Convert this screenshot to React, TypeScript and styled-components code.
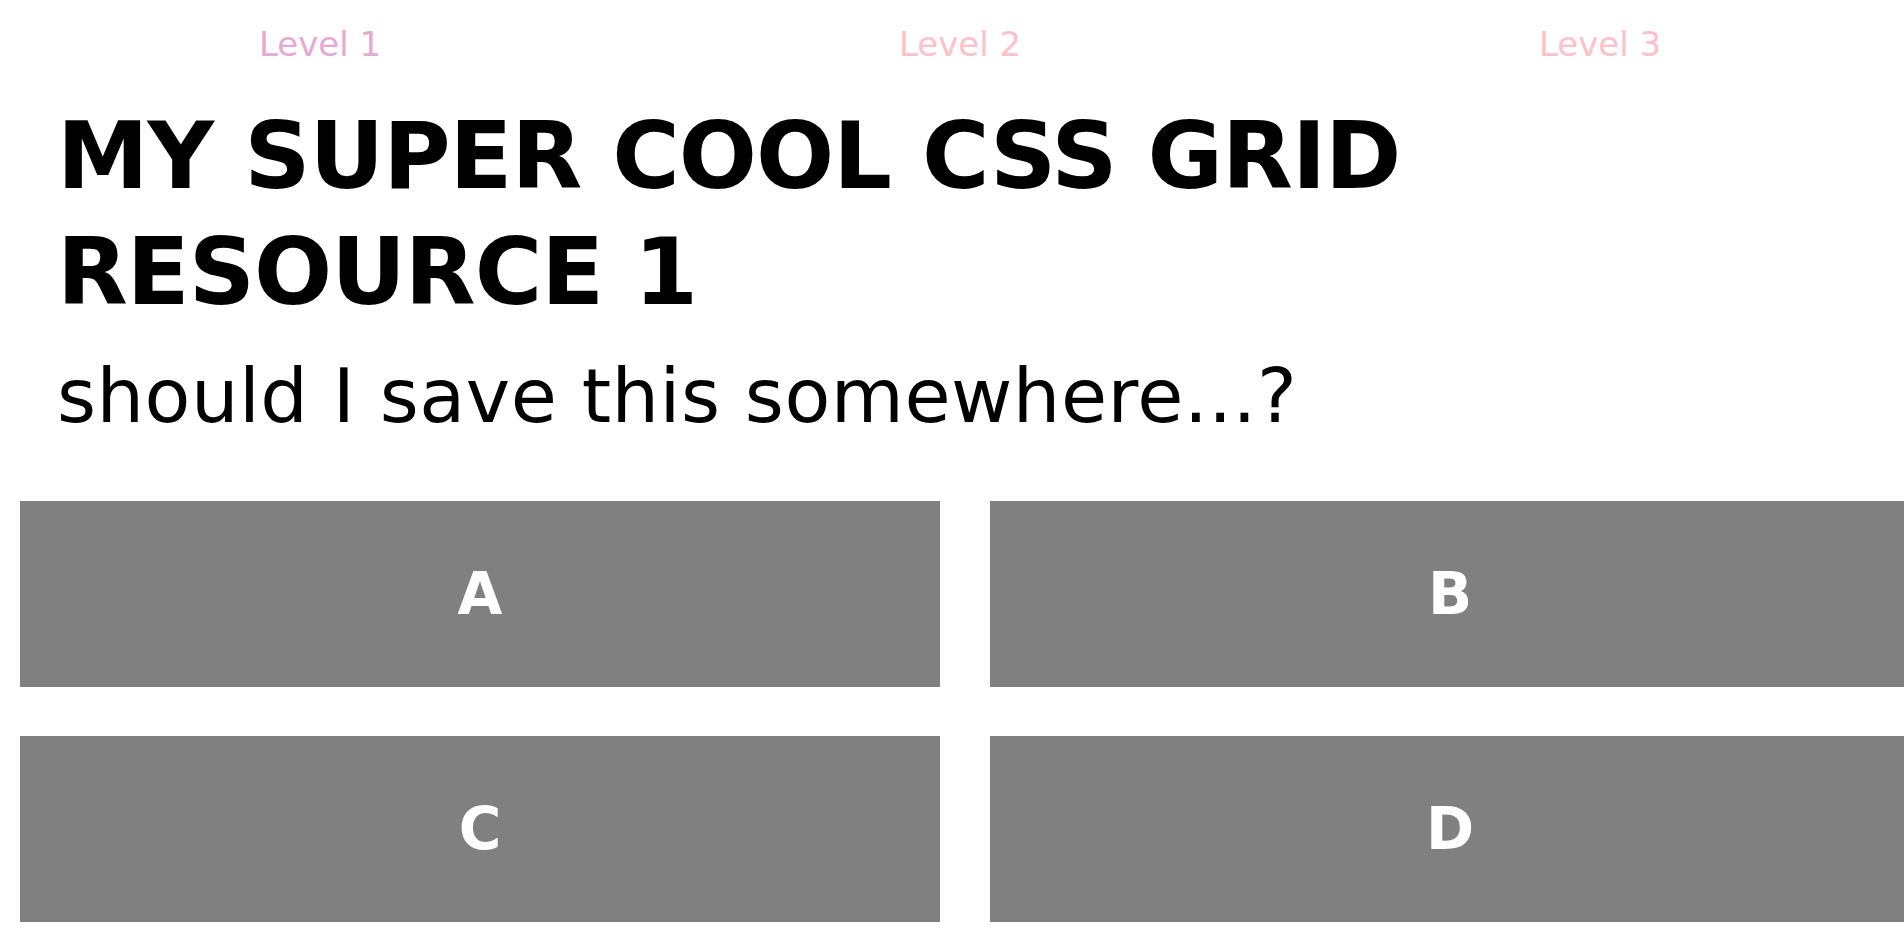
import React from "react";
import styled, { createGlobalStyle } from "styled-components";

const GlobalStyle = createGlobalStyle`
  html, body {
    margin: 0;
    padding: 0;
    overflow: hidden;
    background: #ffffff;
  }
  body {
    font-family: "DejaVu Sans", "Liberation Sans", sans-serif;
    color: #000;
  }
`;

const Page = styled.div`
  width: 1920px;
  display: flex;
  flex-direction: column;
`;

const Nav = styled.nav`
  display: grid;
  grid-template-columns: repeat(3, 640px);
  padding-top: 24px;
`;

const NavItem = styled.a<{ $color: string }>`
  display: block;
  text-align: center;
  font-size: 34px;
  line-height: 40px;
  font-weight: 400;
  color: ${(p) => p.$color};
  text-decoration: none;
`;

const Header = styled.header`
  display: flex;
  flex-direction: column;
  padding-left: 57px;
`;

const Title = styled.h1`
  margin: 35px 0 0;
  font-size: 92px;
  line-height: 116px;
  font-weight: 700;
  letter-spacing: -1px;
  max-width: 1700px;
`;

const Subtitle = styled.p`
  margin: 20px 0 0;
  font-size: 75px;
  line-height: 90px;
  font-weight: 400;
  letter-spacing: 0.5px;
`;

const Grid = styled.section`
  display: grid;
  grid-template-columns: 920px 920px;
  grid-auto-rows: 186px;
  column-gap: 50px;
  row-gap: 49px;
  margin: 60px 0 0 20px;
`;

const Tile = styled.div`
  background: #808080;
  color: #ffffff;
  display: flex;
  align-items: center;
  justify-content: center;
  font-size: 58px;
  font-weight: 700;
`;

const levels = [
  { label: "Level 1", color: "#e8a8d6" },
  { label: "Level 2", color: "#ffc0cb" },
  { label: "Level 3", color: "#ffc0cb" },
];

export default function App() {
  return (
    <>
      <GlobalStyle />
      <Page>
        <Nav>
          {levels.map((l) => (
            <NavItem key={l.label} $color={l.color} href="#">
              {l.label}
            </NavItem>
          ))}
        </Nav>
        <Header>
          <Title>MY SUPER COOL CSS GRID RESOURCE 1</Title>
          <Subtitle>should I save this somewhere...?</Subtitle>
        </Header>
        <Grid>
          {["A", "B", "C", "D"].map((t) => (
            <Tile key={t}>{t}</Tile>
          ))}
        </Grid>
      </Page>
    </>
  );
}
